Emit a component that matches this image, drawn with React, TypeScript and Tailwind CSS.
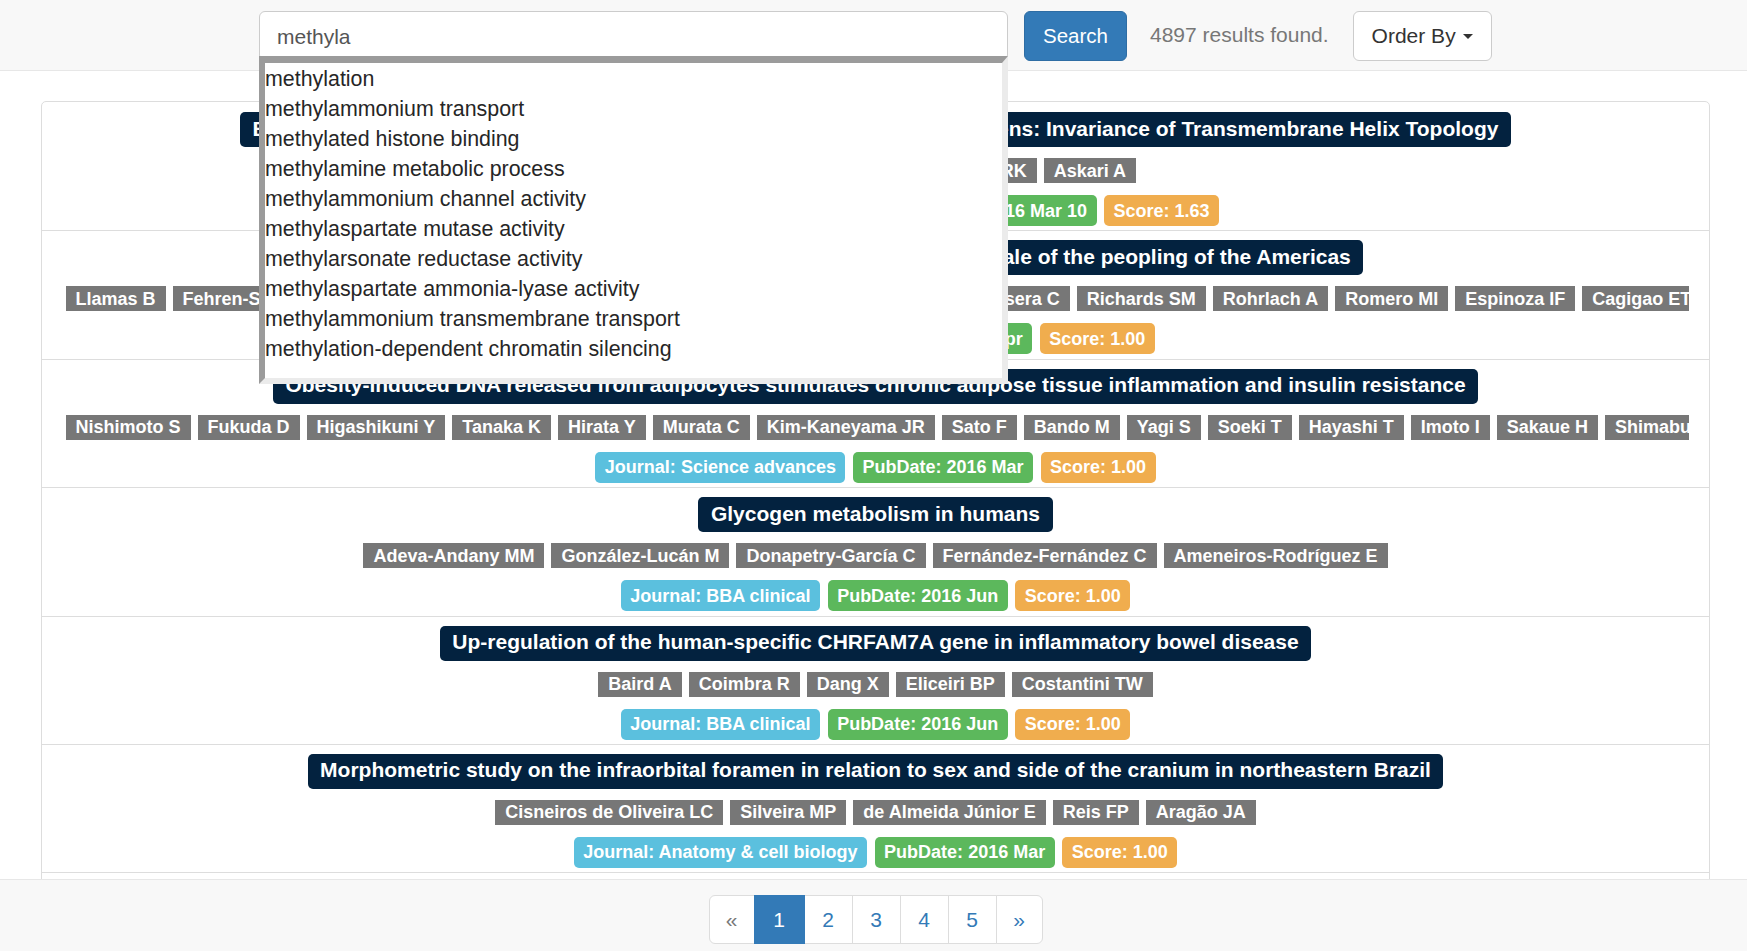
import React from 'react';

type Paper = {
  title: string;
  authors: string[];
  journal: string;
  date: string;
  score: string;
};

const suggestions = [
  'methylation',
  'methylammonium transport',
  'methylated histone binding',
  'methylamine metabolic process',
  'methylammonium channel activity',
  'methylaspartate mutase activity',
  'methylarsonate reductase activity',
  'methylaspartate ammonia-lyase activity',
  'methylammonium transmembrane transport',
  'methylation-dependent chromatin silencing',
];

const papers: Paper[] = [
  {
    title:
      'Evolutionary Conservation of Na,K-ATPase Subunit in Animals and Pathogens: Invariance of Transmembrane Helix Topology',
    authors: ['Shapiro JI', 'Liu Z', 'Li J', 'Bai Y', 'Kumar RK', 'Askari A'],
    journal: 'Biochimica et biophysica acta',
    date: '2016 Mar 10',
    score: '1.63',
  },
  {
    title:
      'Ancient mitochondrial DNA provides high-resolution time scale of the peopling of the Americas',
    authors: [
      'Llamas B',
      'Fehren-Schmitz L',
      'Valverde G',
      'Soubrier J',
      'Mallick S',
      'Rohland N',
      'Nordenfelt S',
      'Valdiosera C',
      'Richards SM',
      'Rohrlach A',
      'Romero MI',
      'Espinoza IF',
      'Cagigao ET',
      'Jiménez LW',
      'Makowski K',
      'Reyes IS',
      'Cooper A',
      'Haak W',
    ],
    journal: 'Science advances',
    date: '2016 Apr',
    score: '1.00',
  },
  {
    title:
      'Obesity-induced DNA released from adipocytes stimulates chronic adipose tissue inflammation and insulin resistance',
    authors: [
      'Nishimoto S',
      'Fukuda D',
      'Higashikuni Y',
      'Tanaka K',
      'Hirata Y',
      'Murata C',
      'Kim-Kaneyama JR',
      'Sato F',
      'Bando M',
      'Yagi S',
      'Soeki T',
      'Hayashi T',
      'Imoto I',
      'Sakaue H',
      'Shimabukuro M',
      'Sata M',
    ],
    journal: 'Science advances',
    date: '2016 Mar',
    score: '1.00',
  },
  {
    title: 'Glycogen metabolism in humans',
    authors: [
      'Adeva-Andany MM',
      'González-Lucán M',
      'Donapetry-García C',
      'Fernández-Fernández C',
      'Ameneiros-Rodríguez E',
    ],
    journal: 'BBA clinical',
    date: '2016 Jun',
    score: '1.00',
  },
  {
    title: 'Up-regulation of the human-specific CHRFAM7A gene in inflammatory bowel disease',
    authors: ['Baird A', 'Coimbra R', 'Dang X', 'Eliceiri BP', 'Costantini TW'],
    journal: 'BBA clinical',
    date: '2016 Jun',
    score: '1.00',
  },
  {
    title:
      'Morphometric study on the infraorbital foramen in relation to sex and side of the cranium in northeastern Brazil',
    authors: [
      'Cisneiros de Oliveira LC',
      'Silveira MP',
      'de Almeida Júnior E',
      'Reis FP',
      'Aragão JA',
    ],
    journal: 'Anatomy & cell biology',
    date: '2016 Mar',
    score: '1.00',
  },
  {
    title: 'Metabolic regulation of DNA methylation in health and disease',
    authors: ['Smith J', 'Lee K'],
    journal: 'BBA clinical',
    date: '2016 Jun',
    score: '1.00',
  },
];

const PaperRow = ({ paper }: { paper: Paper }) => (
  <li className="h-[128.4px] border-b border-[#ddd] px-[20px] pt-[9px] flex flex-col">
    <div className="h-[35px] text-center whitespace-nowrap overflow-hidden">
      <span className="inline-block align-top bg-[#03223f] text-white font-bold text-[21px] leading-[21px] pt-[5.5px] pb-[8.5px] px-[12.5px] rounded-[5px]">
        {paper.title}
      </span>
    </div>
    <div className="mt-[11px] h-[25px] text-center whitespace-nowrap overflow-hidden leading-none">
      {paper.authors.map((a) => (
        <span
          key={a}
          className="inline-block align-top mx-[3.5px] bg-[#777] text-white font-bold text-[18px] leading-[18px] py-[3.5px] px-[10px]"
        >
          {a}
        </span>
      ))}
    </div>
    <div className="mt-[12px] h-[31px] text-center whitespace-nowrap overflow-hidden leading-none">
      <span className="inline-block align-top mx-[3.75px] bg-[#5bc0de] text-white font-bold text-[18px] leading-[18px] py-[6.5px] px-[9.5px] rounded-[5px]">
        Journal: {paper.journal}
      </span>
      <span className="inline-block align-top mx-[3.75px] bg-[#5cb85c] text-white font-bold text-[18px] leading-[18px] py-[6.5px] px-[9.5px] rounded-[5px]">
        PubDate: {paper.date}
      </span>
      <span className="inline-block align-top mx-[3.75px] bg-[#f0ad4e] text-white font-bold text-[18px] leading-[18px] py-[6.5px] px-[9.5px] rounded-[5px]">
        Score: {paper.score}
      </span>
    </div>
  </li>
);

const Pagination = () => {
  const pages = ['1', '2', '3', '4', '5'];
  return (
    <ul className="flex h-[49px] text-[21px] leading-none">
      <li className="w-[46px] h-full flex items-center justify-center bg-white border border-[#ddd] rounded-l-[6px] text-[#777]">
        «
      </li>
      {pages.map((p) => (
        <li
          key={p}
          className={
            p === '1'
              ? 'w-[51px] -ml-px h-full flex items-center justify-center bg-[#337ab7] border border-[#337ab7] text-white relative'
              : 'w-[49px] -ml-px h-full flex items-center justify-center bg-white border border-[#ddd] text-[#337ab7]'
          }
        >
          {p}
        </li>
      ))}
      <li className="w-[47px] -ml-px h-full flex items-center justify-center bg-white border border-[#ddd] rounded-r-[6px] text-[#337ab7]">
        »
      </li>
    </ul>
  );
};

const App = () => {
  return (
    <div className="h-[951px] w-full overflow-hidden bg-white flex flex-col font-['Liberation_Sans',Arial,sans-serif] text-[#333]">
      <nav className="h-[71px] shrink-0 bg-[#f8f8f8] border-b border-[#e7e7e7] flex items-start pt-[11px] pl-[259px]">
        <div className="relative w-[749px] h-[50px]">
          <input
            className="w-full h-full bg-white border border-[#ccc] rounded-[6px] px-[17px] pt-[2px] text-[21px] text-[#555] outline-none"
            defaultValue="methyla"
          />
          <ul className="absolute z-10 top-[45px] left-0 w-[749px] h-[328px] bg-white pt-[1px] border-t-[7px] border-l-[6px] border-r-[6px] border-b-[6px] border-t-[#9b9b9b] border-l-[#9b9b9b] border-r-[#ebebeb] border-b-[#ebebeb] text-[21.4px] leading-[30px] text-[#262626]">
            {suggestions.map((s) => (
              <li key={s} className="whitespace-nowrap">
                {s}
              </li>
            ))}
          </ul>
        </div>
        <button className="ml-[16px] w-[103px] h-[50px] bg-[#337ab7] border border-[#2e6da4] rounded-[6px] text-white text-[20.5px]">
          Search
        </button>
        <span className="ml-[23px] mt-[12.5px] text-[21px] leading-[21px] text-[#777]">
          4897 results found.
        </span>
        <button className="ml-[24px] w-[139px] h-[50px] bg-white border border-[#ccc] rounded-[6px] text-[21px] text-[#333] flex items-center justify-center">
          Order By
          <span className="ml-[7px] w-0 h-0 border-l-[5.5px] border-r-[5.5px] border-t-[5px] border-l-transparent border-r-transparent border-t-[#333]" />
        </button>
      </nav>

      <main className="flex-1 overflow-hidden pt-[30px]">
        <ul className="ml-[41px] w-[1669px] border border-[#ddd] rounded-[5px] pt-[1px] bg-white">
          {papers.map((p) => (
            <PaperRow key={p.title} paper={p} />
          ))}
        </ul>
      </main>

      <footer className="h-[72px] shrink-0 bg-[#f8f8f8] border-t border-[#e7e7e7] flex justify-center pt-[15px] pl-[4px]">
        <Pagination />
      </footer>
    </div>
  );
};

export default App;
